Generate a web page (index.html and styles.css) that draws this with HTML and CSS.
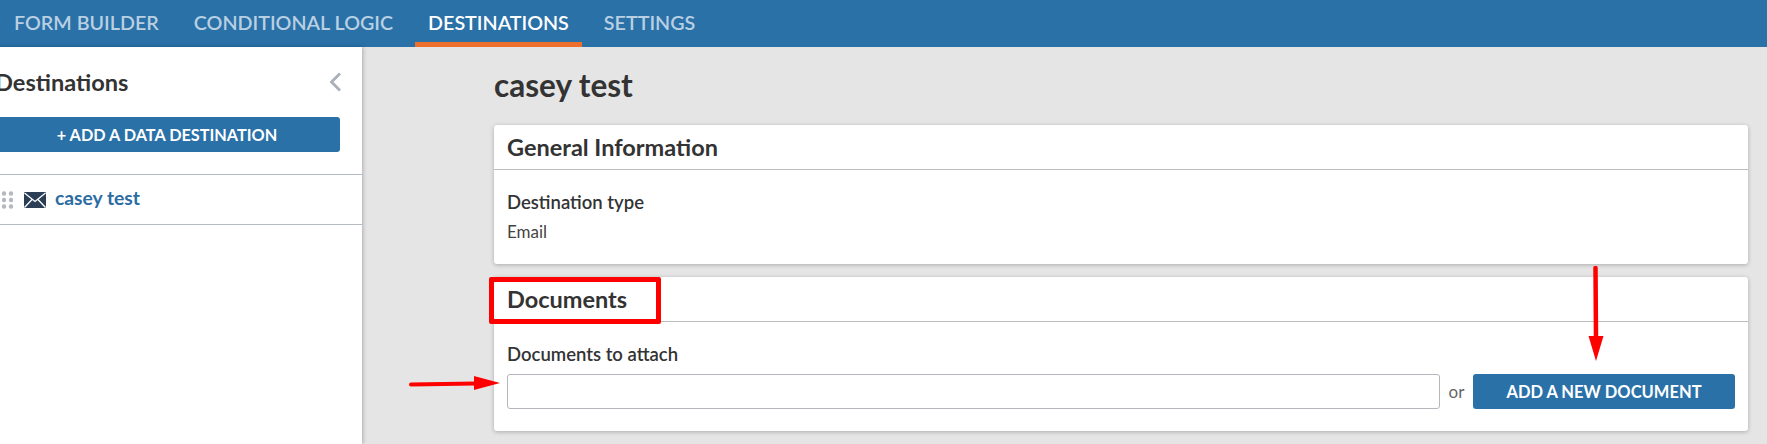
FILE: index.html
```html
<!DOCTYPE html>
<html lang="en">
<head>
  <meta charset="UTF-8">
  <title>Destinations</title>
  <link rel="stylesheet" href="styles.css">
</head>
<body>
  <div class="topbar">
    <a class="tab">FORM BUILDER</a>
    <a class="tab">CONDITIONAL LOGIC</a>
    <a class="tab active">DESTINATIONS</a>
    <a class="tab">SETTINGS</a>
  </div>

  <div class="suit">
    <!-- SIDEBAR -->
    <div class="sidebar">
      <div class="sideHead">
        <h2>Destinations</h2>
        <svg class="chevron" width="13" height="20" viewBox="0 0 13 20"><path d="M11 1.500 2.500 10l8.500 8.500" fill="none" stroke="#a9b0b8" stroke-width="2.800"/></svg>
      </div>
      <button class="addDest">+ ADD A DATA DESTINATION</button>
      <div class="destRow">
        <svg class="dots" width="11" height="18" viewBox="0 0 11 18" fill="#b4b9bf">
          <circle cx="2" cy="2.500" r="2.200"/><circle cx="9" cy="2.500" r="2.200"/>
          <circle cx="2" cy="9" r="2.200"/><circle cx="9" cy="9" r="2.200"/>
          <circle cx="2" cy="15.500" r="2.200"/><circle cx="9" cy="15.500" r="2.200"/>
        </svg>
        <svg class="mail" width="22" height="16" viewBox="0 0 22 16">
          <rect width="22" height="16" rx="1" fill="#2c3e55"/>
          <path d="M0.500 1 11 9.500 21.500 1M0.500 15.500 8 7.500M21.500 15.500 14 7.500" fill="none" stroke="#fff" stroke-width="1.300"/>
        </svg>
        <span class="destName">casey test</span>
      </div>
    </div>

    <!-- MAIN -->
    <div class="main">
      <h1>casey test</h1>

      <div class="card">
        <div class="cardHead">General Information</div>
        <div class="cardBody">
          <div class="label">Destination type</div>
          <div class="value">Email</div>
        </div>
      </div>

      <div class="card">
        <div class="cardHead">Documents</div>
        <div class="cardBody">
          <div class="label">Documents to attach</div>
          <div class="attachRow">
            <input class="docInput" type="text">
            <span class="or">or</span>
            <button class="addDoc">ADD A NEW DOCUMENT</button>
          </div>
        </div>
      </div>
    </div>
  </div>

  <!-- ANNOTATIONS -->
  <div class="redBox"></div>
  <svg class="arrowLeft" width="92" height="16" viewBox="0 0 92 16">
    <path d="M2 9.500 67 8.500" stroke="#f00" stroke-width="4" stroke-linecap="round"/>
    <path d="M65 1 91 8 65 15z" fill="#f00"/>
  </svg>
  <svg class="arrowDown" width="16" height="96" viewBox="0 0 16 96">
    <path d="M7.500 2 8 72" stroke="#f00" stroke-width="4.500" stroke-linecap="round"/>
    <path d="M0.500 70H15.500L8 95z" fill="#f00"/>
  </svg>
</body>
</html>
```

FILE: styles.css
```css
* { margin:0; padding:0; box-sizing:border-box; }
html, body { height:100%; overflow:hidden; background:#e5e5e5; font-family:"Lato","Open Sans",sans-serif; color:#333; }
body { display:flex; flex-direction:column; position:relative; }

/* TOP BAR */
.topbar {
  height:47px;
  flex:none;
  display:flex;
  gap:9px;
  padding-left:1px;
  background:#2a71a8;
}
.tab {
  padding:0 13px;
  line-height:45px;
  font-size:19.700px;
  font-weight:600;
  color:#b9d0e2;
}
.tab.active {
  color:#fff;
  border-bottom:5px solid #ee6e2d;
}

.suit { flex:1; display:flex; min-height:0; }

/* SIDEBAR */
.sidebar {
  width:382px;
  margin-left:-20px;
  flex:none;
  background:#fff;
  box-shadow:1px 0 4px rgba(0,0,0,0.25);
}
.sideHead {
  height:70px;
  padding:0 20px 0 15px;
  display:flex;
  justify-content:space-between;
  align-items:center;
}
.sideHead h2 { font-size:23.600px; font-weight:700; }
.addDest {
  display:block;
  width:346px;
  height:35px;
  margin-left:14px;
  border:none;
  border-radius:3px;
  background:#2a71a8;
  color:#fff;
  font:700 16.250px "Lato",sans-serif;
}
.destRow {
  height:51px;
  margin-top:22px;
  padding-left:22px;
  display:flex;
  align-items:center;
  border-top:1px solid #b4bac1;
  border-bottom:1px solid #b4bac1;
}
.dots { margin-right:11px; }
.mail { margin-right:9px; }
.destName { font-size:19.300px; font-weight:700; color:#2a6ca3; line-height:20px; padding-bottom:3px; }

/* MAIN */
.main { flex:1; padding:0 19px 0 132px; }
.main h1 {
  height:78px;
  padding-top:19px;
  font-size:31.500px;
  font-weight:700;
}
.card {
  margin-bottom:13px;
  background:#fff;
  border-radius:3px;
  box-shadow:0 1px 4px rgba(0,0,0,0.25);
}
.cardHead {
  height:45px;
  padding:0 13px;
  line-height:44px;
  font-size:23.500px;
  font-weight:700;
  border-bottom:1px solid #bcbcbc;
}
.cardBody { padding:22px 13px 22px; }
.label { font-size:18.500px; font-weight:600; line-height:20px; margin-bottom:10px; }
.value { font-size:17px; line-height:20px; color:#444; }

.attachRow { display:flex; align-items:center; }
.docInput {
  flex:1;
  height:35px;
  border:1px solid #b4b8bc;
  border-radius:3px;
  background:#fff;
}
.or { width:33px; text-align:center; font-size:17px; color:#666; }
.addDoc {
  width:262px;
  height:35px;
  border:none;
  border-radius:3px;
  background:#2a71a8;
  color:#fff;
  font:700 16.500px "Lato",sans-serif;
}

/* ANNOTATIONS drawn over the screenshot */
.redBox {
  position:absolute;
  left:489px; top:277px;
  width:172px; height:47px;
  border:5px solid #f00;
  border-radius:2px;
}
.arrowLeft { position:absolute; left:409px; top:375px; }
.arrowDown { position:absolute; left:1588px; top:266px; }
```
